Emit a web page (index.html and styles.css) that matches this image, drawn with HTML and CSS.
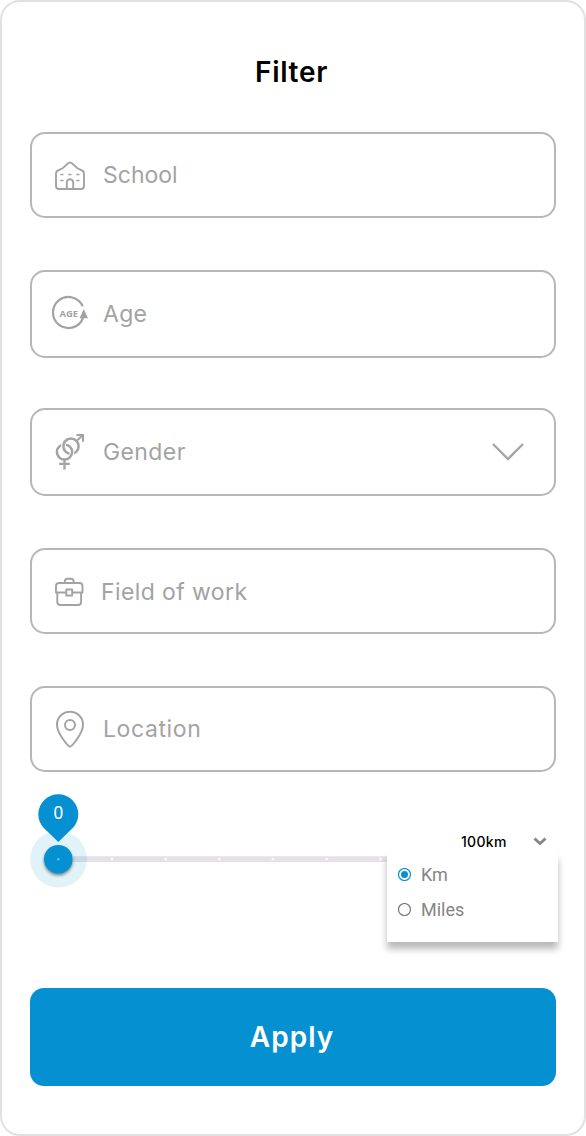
FILE: index.html
```html
<!DOCTYPE html>
<html lang="en">
<head>
<meta charset="utf-8">
<title>Filter</title>
<link rel="stylesheet" href="styles.css">
</head>
<body>
<main class="card">
  <h1 class="title">Filter</h1>
  <div class="fields">
    <div class="field">
      <svg class="icon" width="36" height="40" viewBox="0 0 36 40" fill="none" stroke="#a3a3a3" stroke-width="1.9" stroke-linecap="round" stroke-linejoin="round">
        <path d="M7 34h22a3 3 0 0 0 3-3V19a4 4 0 0 0-3-4c-5-1-6.500-5.300-9.500-7a3 3 0 0 0-3 0C13.500 9.700 12 14 7 15a4 4 0 0 0-3 4v12a3 3 0 0 0 3 3ZM14.800 34V27.500a3.200 3.200 0 0 1 6.400 0V34"/>
        <path stroke-width="1.700" d="M9 19.500h1.800M17 19.500h1.800M25 19.500h1.800M9 25.500h1.800M25 25.500h1.800"/>
      </svg>
      <span class="label school">School</span>
    </div>
    <div class="field tall">
      <svg class="icon" width="36" height="40" viewBox="0 0 36 40">
        <path d="M30.700 12.300A15.500 15.500 0 1 0 31 24" fill="none" stroke="#a3a3a3" stroke-width="2.200"/>
        <path d="M31.800 15 36 24.200H27.500Z" fill="#a3a3a3"/>
        <text class="age-mark" x="7.600" y="22.700" textLength="18.500" lengthAdjust="spacingAndGlyphs">AGE</text>
      </svg>
      <span class="label age">Age</span>
    </div>
    <div class="field tall gender-field">
      <svg class="icon" width="36" height="40" viewBox="0 0 36 40" fill="none" stroke="#a3a3a3" stroke-width="2.500">
        <circle cx="19" cy="14.200" r="7.600"/>
        <circle cx="12.500" cy="20" r="7.600" stroke="#fff" stroke-width="4.600"/>
        <circle cx="12.500" cy="20" r="7.600"/>
        <path d="M11.700 16.200A7.600 7.600 0 0 1 14 8.500" stroke="#fff" stroke-width="4.600"/>
        <path d="M12.500 18.200A7.600 7.600 0 0 1 15.500 7.400"/>
        <path d="M12.500 27.500v10M7.200 31.800h10.600" stroke-width="2.300"/>
        <path d="m24.500 9 6.500-6M24.500 3h6.500v6.700" stroke-width="2"/>
      </svg>
      <span class="label gender">Gender</span>
      <svg class="chevron" width="34" height="22" viewBox="0 0 34 22" fill="none" stroke="#a3a3a3" stroke-width="2.300"><path d="m2 3 15 15L32 3"/></svg>
    </div>
    <div class="field work-field">
      <svg class="icon" width="36" height="40" viewBox="0 0 36 40" fill="none" stroke="#a3a3a3" stroke-width="1.900" stroke-linejoin="round">
        <path d="M6.500 12h21a3 3 0 0 1 3 3v6.500H20.200M14.300 21.500H4V15a3 3 0 0 1 2.500-3M5.300 21.500V31a3 3 0 0 0 3 3h17.800a3 3 0 0 0 3-3v-9.500M12.800 12v-1.500a2.800 2.800 0 0 1 2.800-2.800h3.300a2.800 2.800 0 0 1 2.800 2.800V12M14.300 18.500h5.900v6h-5.900Z"/>
      </svg>
      <span class="label work">Field of work</span>
    </div>
    <div class="field location-field">
      <svg class="icon" width="36" height="40" viewBox="0 0 36 40" fill="none" stroke="#a3a3a3" stroke-width="2">
        <path d="M18 37.700c-1.500 0-13-13-13-22.300a13 12.700 0 0 1 26 0c0 9.300-11.500 22.300-13 22.300Z"/><circle cx="18" cy="16" r="5"/>
      </svg>
      <span class="label location">Location</span>
    </div>
  </div>
  <section class="distance">
    <svg class="slider" width="358" height="100" viewBox="0 0 358 100">
      <path d="M43 71.200h315" stroke="#e6e1e9" stroke-width="5.700"/>
      <g fill="#f9f8fa"><circle cx="82" cy="71.200" r="1.400"/><circle cx="135.700" cy="71.200" r="1.400"/><circle cx="189.400" cy="71.200" r="1.400"/><circle cx="243" cy="71.200" r="1.400"/><circle cx="296.700" cy="71.200" r="1.400"/><circle cx="350.500" cy="71.200" r="1.400"/></g>
      <circle cx="28.500" cy="71.200" r="28.400" fill="#0590d1" fill-opacity=".12"/>
      <circle class="thumb" cx="28.300" cy="71.200" r="14.300"/>
      <circle cx="28.300" cy="71.200" r="1.300" fill="#69bce3"/>
      <path d="M28.300 54 13.600 39.800a20 20 0 1 1 29.400 0Z" fill="#0590d1"/>
      <text class="value" x="28.300" y="31">0</text>
    </svg>
    <div class="unit">
      <div class="selected"><span class="distance-value">100km</span><svg class="caret" width="14" height="10" viewBox="0 0 14 10" fill="none" stroke="#858585" stroke-width="2.800"><path d="m1.500 2.500 5.500 5 5.500-5"/></svg></div>
      <div class="menu">
        <div class="option"><svg width="14" height="14" viewBox="0 0 14 14"><circle cx="6.500" cy="6.500" r="6" fill="none" stroke="#0590d1" stroke-width="1.200"/><circle cx="6.500" cy="6.500" r="3.500" fill="#0590d1"/></svg><span>Km</span></div>
        <div class="option"><svg width="14" height="14" viewBox="0 0 14 14"><circle cx="6.500" cy="6.500" r="6" fill="none" stroke="#777" stroke-width="1.200"/></svg><span>Miles</span></div>
      </div>
    </div>
  </section>
  <button class="apply">Apply</button>
</main>
</body>
</html>
```
FILE: styles.css
```css
* { box-sizing: border-box; }
body { margin: 0; background: #fff; font-family: Inter, "Open Sans", sans-serif; }
.card {
  width: 586px;
  height: 1136px;
  padding: 50px 28px 0;
  border: 2px solid #e1e1e1;
  border-radius: 20px;
  background: #fff;
}
.title { margin: 0 0 0 -3px; height: 80px; font-size: 28px; line-height: 40px; font-weight: 600; text-align: center; color: #000; letter-spacing: .7px; }
.fields { display: flex; flex-direction: column; }
.field {
  display: flex;
  align-items: center;
  height: 86px;
  margin-bottom: 52px;
  padding: 0 20px;
  border: 2px solid #b7b7b7;
  border-radius: 15px;
}
.tall { height: 88px; margin-bottom: 50px; }
.gender-field { margin-bottom: 52px; }
.location-field { margin-bottom: 0; }
.icon { flex: none; margin-right: 15px; overflow: visible; }
.label { font-size: 23px; line-height: 30px; color: #a3a3a3; white-space: nowrap; }
.age { letter-spacing: .3px; }
.gender { letter-spacing: .4px; }
.work { margin-left: -2px; padding-top: 2px; letter-spacing: .4px; }
.location { letter-spacing: .6px; }
.age-mark { font: 700 9.500px "Open Sans", sans-serif; fill: #a3a3a3; }
.chevron { margin-left: auto; margin-right: 9px; }
.distance { display: flex; height: 216px; padding-top: 16px; }
.slider { flex: none; margin-right: -1px; overflow: visible; }
.thumb { fill: #0590d1; filter: drop-shadow(0 2px 1.500px rgba(0,0,0,.45)); }
.value { font: 18px Roboto, sans-serif; fill: #fff; text-anchor: middle; }
.unit { flex: none; width: 171px; padding-top: 42px; }
.selected { display: flex; align-items: center; height: 22px; padding-left: 74px; }
.distance-value { width: 72px; font: 500 14px Inter, sans-serif; letter-spacing: .3px; color: #000; }
.menu { height: 90px; padding: 5px 0 0 11px; background: #fff; box-shadow: 0 7px 7px rgba(0,0,0,.28); }
.option { display: flex; align-items: center; gap: 9px; height: 35px; font: 18px Roboto, sans-serif; color: #858585; }
.apply {
  display: block;
  width: 526px;
  height: 98px;
  padding: 0 2px 0 0;
  border: 0;
  border-radius: 14px;
  background: #0590d1;
  color: #fff;
  font: 600 28px Inter, sans-serif;
  letter-spacing: 1px;
}
```
